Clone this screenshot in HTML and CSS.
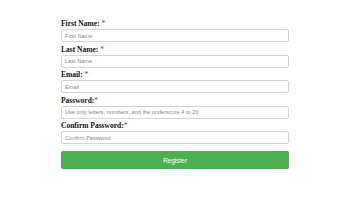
FILE: index.html
```html
<!DOCTYPE html>
<html lang="en">
<head>
    <meta charset="UTF-8">
    <meta name="viewport" content="width=device-width, initial-scale=1.0">
    <title>Register</title>
    <link rel="stylesheet" href="styles.css">
</head>
<body>

    <div class="form-container">
        <form>
            <label for="firstName">First Name: <span class="req">*</span></label>
            <input type="text" id="firstName" placeholder="First Name">

            <label for="lastName">Last Name: <span class="req">*</span></label>
            <input type="text" id="lastName" placeholder="Last Name">

            <label for="email">Email: <span class="req">*</span></label>
            <input type="email" id="email" placeholder="Email">

            <label for="password">Password:<span class="req">*</span></label>
            <input type="password" id="password" placeholder="Use only letters, numbers, and the underscore 4 to 20">

            <label for="confirmPassword">Confirm Password:<span class="req">*</span></label>
            <input type="password" id="confirmPassword" placeholder="Confirm Password">

            <button type="submit">Register</button>
        </form>
    </div>

</body>
</html>
```

FILE: styles.css
```css
* {
    margin: 0;
    padding: 0;
    box-sizing: border-box;
}

body {
    font-family: "Liberation Serif", "Times New Roman", serif;
    background-color: #fff;
    color: #111;
}

.form-container {
    width: 228px;
    margin-left: 61px;
    padding-top: 19px;
}

.form-container label {
    display: block;
    font-size: 7.5px;
    line-height: 9px;
    font-weight: bold;
    margin-bottom: 1px;
}

.form-container .req {
    color: #c9302c;
    font-weight: normal;
}

.form-container input {
    display: block;
    width: 100%;
    height: 13px;
    padding: 0 3px;
    margin-bottom: 2.5px;
    border: 1px solid #d4d4d4;
    border-radius: 2px;
    font-family: "Liberation Sans", Arial, sans-serif;
    font-size: 5.6px;
    color: #333;
}

.form-container input::placeholder {
    color: #888;
}

.form-container button {
    display: block;
    width: 100%;
    height: 18px;
    margin-top: 7px;
    background-color: #4CAF50;
    color: white;
    border: none;
    border-radius: 2px;
    font-family: "Liberation Sans", Arial, sans-serif;
    font-size: 6.5px;
    cursor: pointer;
}

.form-container button:hover {
    background-color: #45a049;
}
```
